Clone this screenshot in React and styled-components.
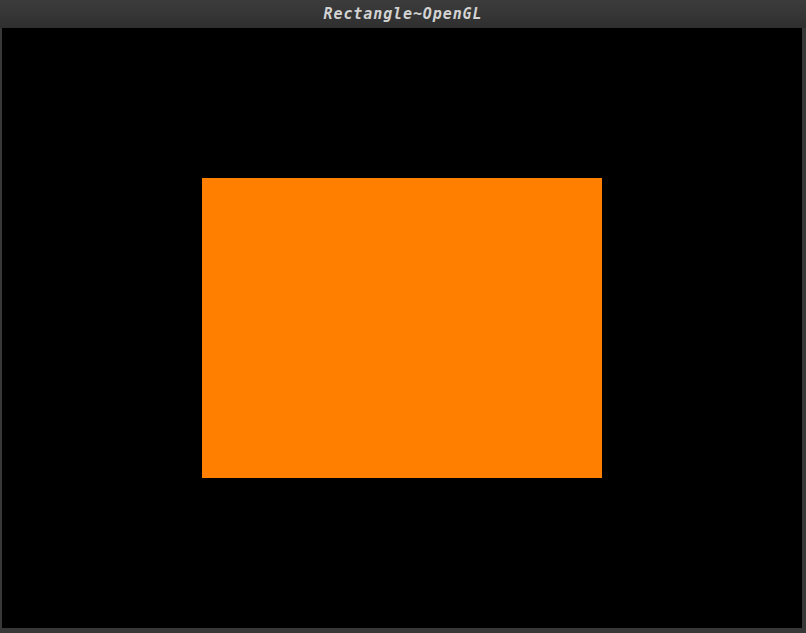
import React from 'react'
import styled, { createGlobalStyle } from 'styled-components'

const GlobalStyle = createGlobalStyle`
  html, body {
    margin: 0;
    padding: 0;
    background: #3a3a3a;
  }
`

const Window = styled.div`
  display: flex;
  flex-direction: column;
  width: 806px;
  height: 633px;
  background: #383838;
  box-sizing: border-box;
  padding: 0 4px 5px 2px;
`

const TitleBar = styled.div`
  display: flex;
  justify-content: center;
  align-items: center;
  height: 28px;
  margin: 0 -4px 0 -2px;
  background: linear-gradient(#3c3c3c, #2f2f2f);
  color: #d2d2d2;
  font-family: "DejaVu Sans Mono", monospace;
  font-weight: bold;
  font-style: italic;
  font-size: 15px;
  letter-spacing: 0.9px;
  padding-bottom: 1px;
  box-sizing: border-box;
`

const Viewport = styled.div`
  display: flex;
  justify-content: center;
  align-items: center;
  width: 800px;
  height: 600px;
  background: #000;
`

const Rect = styled.div`
  width: ${props => props.w}px;
  height: ${props => props.h}px;
  background: ${props => props.color};
`

export default function App() {
  return (
    <>
      <GlobalStyle />
      <Window>
        <TitleBar>Rectangle~OpenGL</TitleBar>
        <Viewport>
          <Rect w={400} h={300} color="#ff8000" />
        </Viewport>
      </Window>
    </>
  )
}
